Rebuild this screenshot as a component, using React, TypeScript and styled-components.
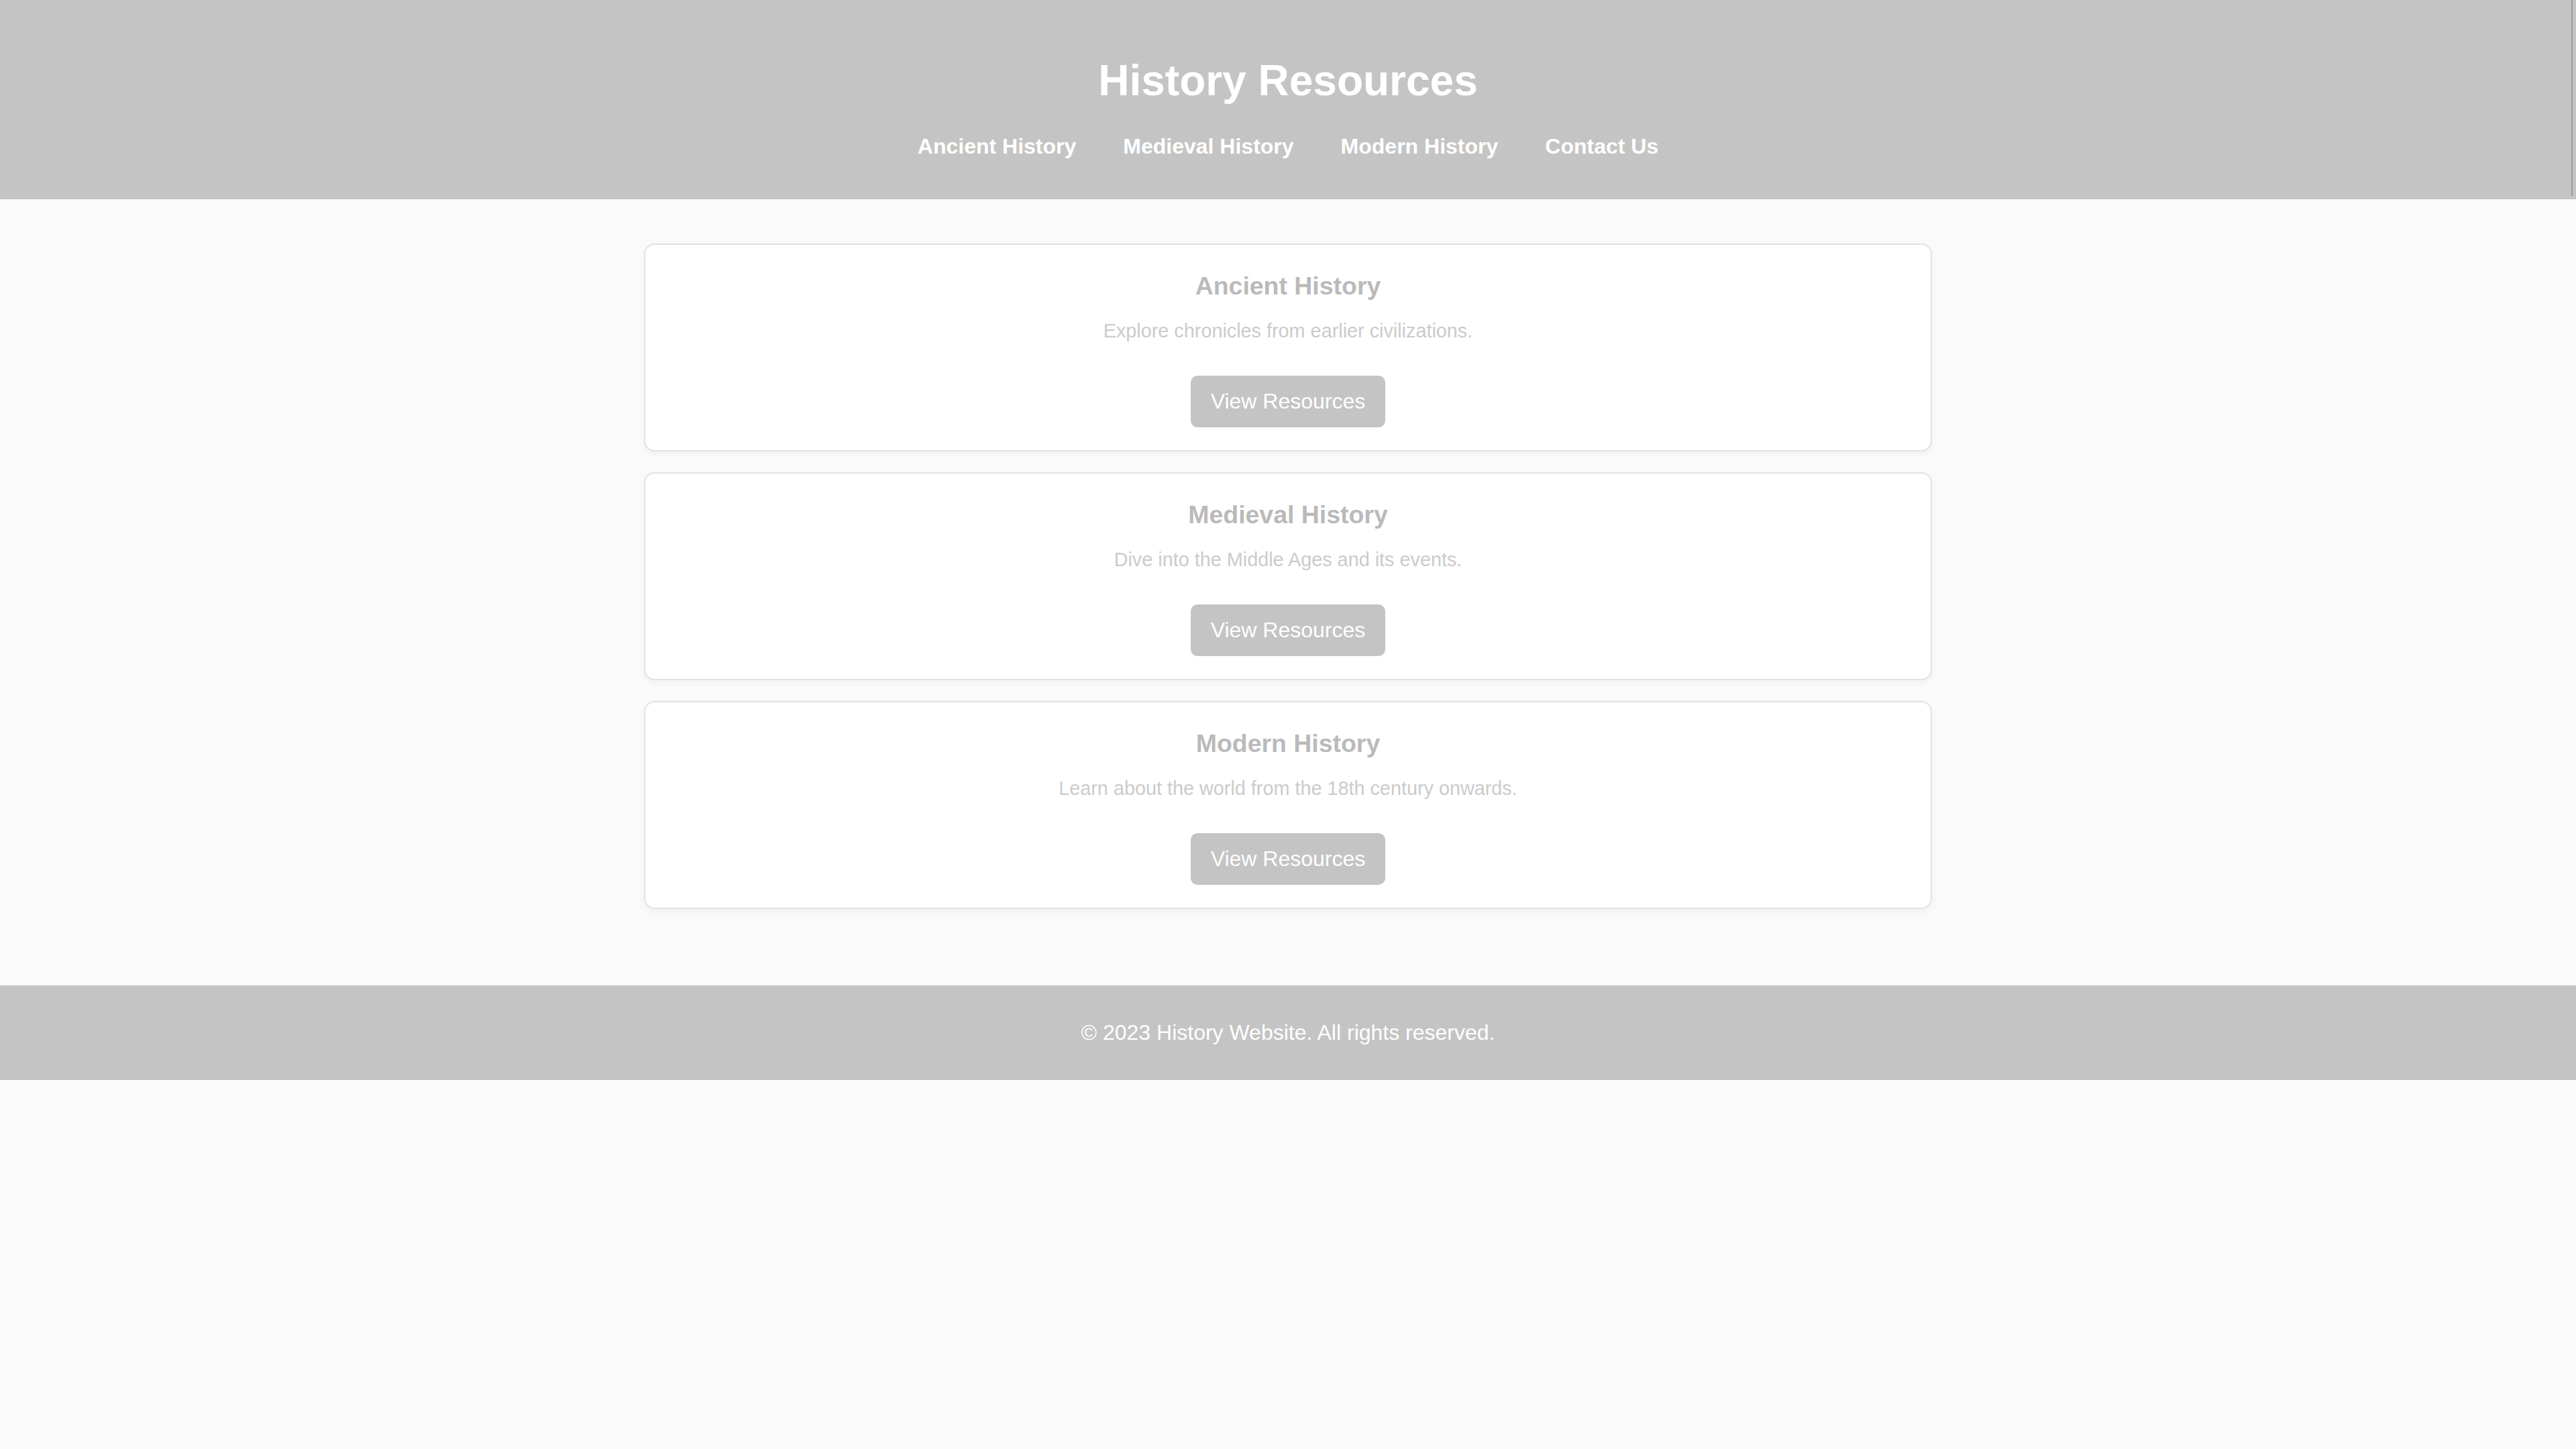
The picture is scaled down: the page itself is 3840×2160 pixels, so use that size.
import React from "react";
import styled, { createGlobalStyle } from "styled-components";

const GlobalStyle = createGlobalStyle`
  html, body {
    margin: 0;
    padding: 0;
    background: #fafafa;
    font-family: "Liberation Sans", Arial, sans-serif;
  }
  * { box-sizing: border-box; }
`;

const Page = styled.div`
  min-height: 2160px;
  background: #fafafa;
`;

const Header = styled.header`
  position: relative;
  background: #c4c4c4;
  color: #ffffff;
  text-align: center;
  padding: 83px 0 60px;
  &::after {
    content: "";
    position: absolute;
    top: 0;
    right: 5px;
    width: 2px;
    height: 292px;
    background: #9a9a9a;
  }
`;

const Title = styled.h1`
  margin: 0 0 43px;
  font-size: 64px;
  font-weight: 700;
  line-height: normal;
`;

const Nav = styled.nav`
  display: flex;
  justify-content: center;
  gap: 70px;
`;

const NavLink = styled.a`
  color: #ffffff;
  font-size: 32px;
  font-weight: 700;
  text-decoration: none;
  line-height: normal;
`;

const Main = styled.main`
  display: flex;
  flex-direction: column;
  align-items: center;
  gap: 31px;
  padding: 66px 0 114px;
`;

const Card = styled.section`
  width: 1920px;
  display: flex;
  flex-direction: column;
  align-items: center;
  background: #ffffff;
  border: 2px solid #e2e2e2;
  border-radius: 16px;
  box-shadow: 0 4px 10px rgba(0, 0, 0, 0.04);
  padding: 40px 40px 34px;
  text-align: center;
`;

const CardTitle = styled.h3`
  margin: 0 0 29px;
  font-size: 37.44px;
  font-weight: 700;
  line-height: normal;
  color: #bababa;
`;

const CardText = styled.p`
  margin: 0 0 50px;
  font-size: 28.8px;
  line-height: normal;
  color: #cbcbcb;
`;

const Button = styled.a`
  display: block;
  background: #c4c4c4;
  color: #ffffff;
  font-size: 32px;
  line-height: normal;
  padding: 20px 30px;
  border-radius: 10px;
  text-decoration: none;
`;

const Footer = styled.footer`
  background: #c4c4c4;
  color: #ffffff;
  text-align: center;
  padding: 52px 0;
`;

const FooterText = styled.p`
  margin: 0;
  font-size: 32px;
  line-height: normal;
`;

const sections = [
  { title: "Ancient History", text: "Explore chronicles from earlier civilizations." },
  { title: "Medieval History", text: "Dive into the Middle Ages and its events." },
  { title: "Modern History", text: "Learn about the world from the 18th century onwards." },
];

export default function App() {
  return (
    <>
      <GlobalStyle />
      <Page>
        <Header>
          <Title>History Resources</Title>
          <Nav>
            <NavLink href="#">Ancient History</NavLink>
            <NavLink href="#">Medieval History</NavLink>
            <NavLink href="#">Modern History</NavLink>
            <NavLink href="#">Contact Us</NavLink>
          </Nav>
        </Header>
        <Main>
          {sections.map((s) => (
            <Card key={s.title}>
              <CardTitle>{s.title}</CardTitle>
              <CardText>{s.text}</CardText>
              <Button href="#">View Resources</Button>
            </Card>
          ))}
        </Main>
        <Footer>
          <FooterText>© 2023 History Website. All rights reserved.</FooterText>
        </Footer>
      </Page>
    </>
  );
}
